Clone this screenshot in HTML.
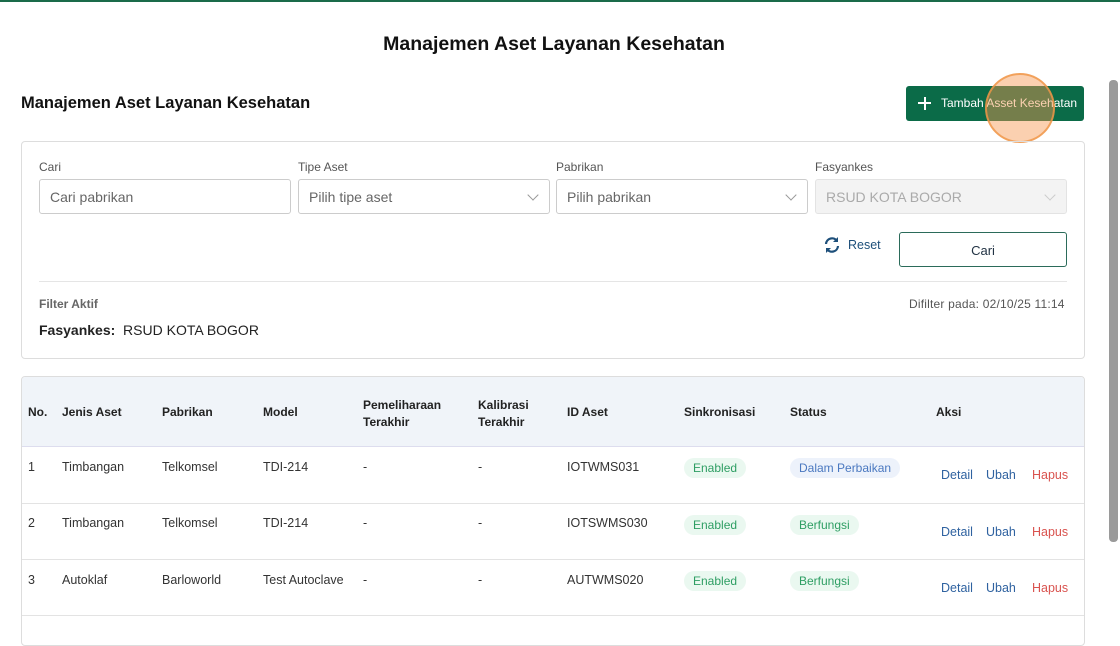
<!DOCTYPE html>
<html><head><style>
*{box-sizing:border-box;margin:0;padding:0}
body{width:1120px;height:625px;overflow:hidden;background:#fff;font-family:"Liberation Sans",sans-serif;color:#222;position:relative}
.a{position:absolute;white-space:nowrap}
.lbl{font-size:12px;color:#555}
.inp{position:absolute;height:35px;border:1px solid #ccc;border-radius:3px;font-size:14px;color:#666;padding:9px 10px}
.chev{position:absolute;right:12px;top:11px;width:8px;height:8px;border-right:1.5px solid #999;border-bottom:1.5px solid #999;transform:rotate(45deg)}
.pill{display:inline-block;padding:3px 9px;border-radius:10px;font-size:12px;font-weight:normal}
.g{background:#eaf8f0;color:#2e9e63}
.b{background:#edf2fb;color:#4a78c0}
.lk{position:absolute;font-size:12.5px}
</style></head><body>
<div class="a" style="left:0;top:0;width:1120px;height:2px;background:#1a6b4a"></div>
<div class="a" style="left:0;top:33px;width:1108px;text-align:center;font-size:19.5px;font-weight:bold;color:#111">Manajemen Aset Layanan Kesehatan</div>
<div class="a" style="left:21px;top:94px;font-size:16.5px;font-weight:bold;color:#111">Manajemen Aset Layanan Kesehatan</div>
<div class="a" style="left:906px;top:86px;width:178px;height:35px;background:#0b6b48;border-radius:3px;color:#fff;font-size:12px;padding:10px 0 0 35px">Tambah Asset Kesehatan</div>
<div class="a" style="left:918px;top:102px;width:13px;height:2px;background:#fff"></div>
<div class="a" style="left:923.5px;top:96.5px;width:2px;height:13px;background:#fff"></div>
<div class="a" style="left:985px;top:73px;width:70px;height:70px;border-radius:50%;background:rgba(247,150,80,0.45);border:2px solid rgba(240,150,70,0.8)"></div>
<div class="a" style="left:1109px;top:80px;width:9px;height:462px;background:#9a9a9a;border-radius:4px"></div>

<div class="a" style="left:21px;top:141px;width:1064px;height:218px;border:1px solid #ddd;border-radius:4px"></div>
<div class="a lbl" style="left:39px;top:160px">Cari</div>
<div class="a lbl" style="left:298px;top:160px">Tipe Aset</div>
<div class="a lbl" style="left:556px;top:160px">Pabrikan</div>
<div class="a lbl" style="left:815px;top:160px">Fasyankes</div>
<div class="inp" style="left:39px;top:179px;width:252px">Cari pabrikan</div>
<div class="inp" style="left:298px;top:179px;width:252px">Pilih tipe aset<div class="chev"></div></div>
<div class="inp" style="left:556px;top:179px;width:252px">Pilih pabrikan<div class="chev"></div></div>
<div class="inp" style="left:815px;top:179px;width:252px;background:#f3f3f3;border-color:#e3e3e3;color:#aaa">RSUD KOTA BOGOR<div class="chev" style="border-color:#ccc"></div></div>
<svg class="a" style="left:823px;top:236px" width="18" height="18" viewBox="0 0 18 18"><path d="M3 8a6 6 0 0 1 11-3M15 10a6 6 0 0 1-11 3" fill="none" stroke="#1d4f7a" stroke-width="2.2"/><path d="M15 1v5h-5z" fill="#1d4f7a"/><path d="M3 17v-5h5z" fill="#1d4f7a"/></svg>
<div class="a" style="left:848px;top:238px;font-size:12.5px;color:#1d4f7a">Reset</div>
<div class="a" style="left:899px;top:232px;width:168px;height:35px;border:1px solid #2b6b5a;border-radius:3px;text-align:center;font-size:13px;padding-top:10px;color:#234">Cari</div>
<div class="a" style="left:39px;top:281px;width:1028px;height:1px;background:#e5e5e5"></div>
<div class="a" style="left:39px;top:297px;font-size:12px;font-weight:bold;color:#666">Filter Aktif</div>
<div class="a" style="left:909px;top:297px;font-size:12px;color:#555;letter-spacing:0.2px">Difilter pada: 02/10/25 11:14</div>
<div class="a" style="left:39px;top:322px;font-size:14px"><b>Fasyankes:</b>&nbsp; RSUD KOTA BOGOR</div>

<div class="a" style="left:21px;top:376px;width:1064px;height:270px;border:1px solid #ddd;border-radius:4px;overflow:hidden">
<div style="height:70px;background:#f0f4f9;border-bottom:1px solid #dde"></div>
<div style="height:57px;border-bottom:1px solid #e3e3e3"></div>
<div style="height:56px;border-bottom:1px solid #e3e3e3"></div>
<div style="height:56px;border-bottom:1px solid #e3e3e3"></div>
</div>
<div class="a" style="top:405px;left:28px;font-size:12px;font-weight:bold">No.</div>
<div class="a" style="top:405px;left:62px;font-size:12px;font-weight:bold">Jenis Aset</div>
<div class="a" style="top:405px;left:162px;font-size:12px;font-weight:bold">Pabrikan</div>
<div class="a" style="top:405px;left:263px;font-size:12px;font-weight:bold">Model</div>
<div class="a" style="top:397px;left:363px;font-size:12px;font-weight:bold;line-height:17px">Pemeliharaan<br>Terakhir</div>
<div class="a" style="top:397px;left:478px;font-size:12px;font-weight:bold;line-height:17px">Kalibrasi<br>Terakhir</div>
<div class="a" style="top:405px;left:567px;font-size:12px;font-weight:bold">ID Aset</div>
<div class="a" style="top:405px;left:684px;font-size:12px;font-weight:bold">Sinkronisasi</div>
<div class="a" style="top:405px;left:790px;font-size:12px;font-weight:bold">Status</div>
<div class="a" style="top:405px;left:936px;font-size:12px;font-weight:bold">Aksi</div>

<div style="font-size:12.5px;color:#333">
<div class="a" style="top:460px;left:28px">1</div><div class="a" style="top:460px;left:62px">Timbangan</div><div class="a" style="top:460px;left:162px">Telkomsel</div><div class="a" style="top:460px;left:263px">TDI-214</div><div class="a" style="top:460px;left:363px">-</div><div class="a" style="top:460px;left:478px">-</div><div class="a" style="top:460px;left:567px">IOTWMS031</div>
<div class="a" style="top:516px;left:28px">2</div><div class="a" style="top:516px;left:62px">Timbangan</div><div class="a" style="top:516px;left:162px">Telkomsel</div><div class="a" style="top:516px;left:263px">TDI-214</div><div class="a" style="top:516px;left:363px">-</div><div class="a" style="top:516px;left:478px">-</div><div class="a" style="top:516px;left:567px">IOTSWMS030</div>
<div class="a" style="top:573px;left:28px">3</div><div class="a" style="top:573px;left:62px">Autoklaf</div><div class="a" style="top:573px;left:162px">Barloworld</div><div class="a" style="top:573px;left:263px">Test Autoclave</div><div class="a" style="top:573px;left:363px">-</div><div class="a" style="top:573px;left:478px">-</div><div class="a" style="top:573px;left:567px">AUTWMS020</div>
</div>
<span class="a pill g" style="top:458px;left:684px">Enabled</span><span class="a pill b" style="top:458px;left:790px">Dalam Perbaikan</span>
<span class="a pill g" style="top:515px;left:684px">Enabled</span><span class="a pill g" style="top:515px;left:790px">Berfungsi</span>
<span class="a pill g" style="top:571px;left:684px">Enabled</span><span class="a pill g" style="top:571px;left:790px">Berfungsi</span>
<div class="lk" style="top:468px;left:941px;color:#2f62a0">Detail</div><div class="lk" style="top:468px;left:986px;color:#2f62a0">Ubah</div><div class="lk" style="top:468px;left:1032px;color:#d9534f">Hapus</div>
<div class="lk" style="top:525px;left:941px;color:#2f62a0">Detail</div><div class="lk" style="top:525px;left:986px;color:#2f62a0">Ubah</div><div class="lk" style="top:525px;left:1032px;color:#d9534f">Hapus</div>
<div class="lk" style="top:581px;left:941px;color:#2f62a0">Detail</div><div class="lk" style="top:581px;left:986px;color:#2f62a0">Ubah</div><div class="lk" style="top:581px;left:1032px;color:#d9534f">Hapus</div>
</body></html>
